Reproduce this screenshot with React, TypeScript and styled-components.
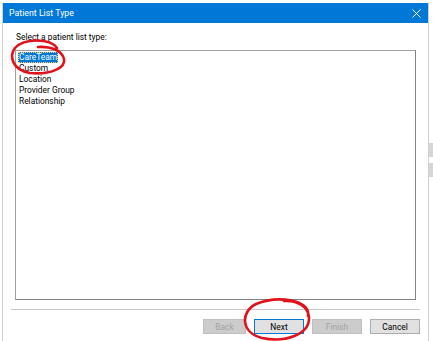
import styled, { createGlobalStyle } from "styled-components";

const GlobalStyle = createGlobalStyle`
  html, body {
    margin: 0;
    padding: 0;
    background: #ffffff;
  }
  body {
    font-family: Roboto, "Liberation Sans", Arial, sans-serif;
  }
`;

const Screen = styled.div`
  position: relative;
  width: 433px;
  height: 341px;
  display: flex;
  flex-direction: column;
  overflow: hidden;
  background: #f4f4f4;
`;

const TopStrip = styled.div`
  height: 3px;
  flex: none;
  overflow: hidden;
  background: #ffffff;
  display: flex;
  align-items: flex-end;
  gap: 40px;
  padding-left: 22px;
  font-size: 8px;
  line-height: 10px;
  color: #666;
  white-space: nowrap;
`;

const Middle = styled.div`
  flex: 1;
  display: flex;
  min-height: 0;
`;

const LeftStrip = styled.div`
  width: 3px;
  flex: none;
  background: #ffffff;
  border-right: 1px solid #d0d0d0;
  box-sizing: border-box;
`;

const RightStrip = styled.div`
  width: 5px;
  flex: none;
  background: #ffffff;
  border-left: 1px solid #cfcfcf;
  box-sizing: border-box;
  display: flex;
  flex-direction: column;
  gap: 6px;
  padding-top: 140px;
`;

const ScrollBlock = styled.div`
  height: 14px;
  background: #d6d6d6;
`;

const Dialog = styled.div`
  flex: 1;
  display: flex;
  flex-direction: column;
  background: #ffffff;
`;

const TitleBar = styled.div`
  height: 20px;
  flex: none;
  background: #0078d7;
  color: #ffffff;
  display: flex;
  align-items: center;
  justify-content: space-between;
  padding: 0 6px 0 6px;
  font-size: 8.8px;
`;

const CloseIcon = styled.svg`
  width: 9px;
  height: 9px;
  margin-right: 1px;
`;

const Body = styled.div`
  flex: 1;
  display: flex;
  flex-direction: column;
  padding: 8px 12px 0 12px;
`;

const Label = styled.div`
  font-size: 8.4px;
  line-height: 12px;
  color: #000;
  padding-left: 1px;
`;

const ListBox = styled.div`
  margin-top: 7px;
  height: 250px;
  box-sizing: border-box;
  border: 1px solid #828282;
  border-color: #a0a0a0 #828282 #828282 #a0a0a0;
  padding: 1px 2px;
  display: flex;
  flex-direction: column;
  align-items: flex-start;
`;

const Item = styled.div<{ $selected?: boolean }>`
  font-size: 8.4px;
  line-height: 11px;
  height: 11px;
  padding: 0 1px;
  color: ${(p) => (p.$selected ? "#ffffff" : "#000000")};
  background: ${(p) => (p.$selected ? "#0078d7" : "transparent")};
  outline: ${(p) => (p.$selected ? "1px dotted #ffcc66" : "none")};
  outline-offset: -1px;
`;

const Separator = styled.div`
  margin: 9px -4px 0 -4px;
  height: 1px;
  background: #c8c8c8;
`;

const ButtonRow = styled.div`
  margin: 9px -4px 0 0;
  display: flex;
  justify-content: flex-end;
  gap: 8px;
`;

const Button = styled.div<{ $disabled?: boolean; $focused?: boolean; $w?: number }>`
  width: ${(p) => p.$w ?? 50}px;
  height: 15px;
  box-sizing: border-box;
  display: flex;
  align-items: center;
  justify-content: center;
  font-size: 8.4px;
  color: ${(p) => (p.$disabled ? "#a3a3a3" : "#000")};
  background: ${(p) => (p.$disabled ? "#cccccc" : "#e1e1e1")};
  border: 1px solid
    ${(p) => (p.$focused ? "#0078d7" : p.$disabled ? "#bfbfbf" : "#adadad")};
`;

const Annotations = styled.svg`
  position: absolute;
  left: 0;
  top: 0;
  width: 433px;
  height: 341px;
  pointer-events: none;
`;

const items = ["CareTeam", "Custom", "Location", "Provider Group", "Relationship"];

export default function App() {
  return (
    <>
      <GlobalStyle />
      <Screen>
        <TopStrip>
          <span>ow</span>
          <span>Fres</span>
          <span>11</span>
          <span>68</span>
          <span>58</span>
          <span>20</span>
          <span>11</span>
          <span>139</span>
          <span>97 ALLERGY</span>
          <span>Mercy</span>
        </TopStrip>
        <Middle>
          <LeftStrip />
          <Dialog>
            <TitleBar>
              <span>Patient List Type</span>
              <CloseIcon viewBox="0 0 10 10">
                <path d="M0.5 0.5 L9.5 9.5 M9.5 0.5 L0.5 9.5" stroke="#ffffff" strokeWidth="1.1" />
              </CloseIcon>
            </TitleBar>
            <Body>
              <Label>Select a patient list type:</Label>
              <ListBox>
                {items.map((it, i) => (
                  <Item key={it} $selected={i === 0}>
                    {it}
                  </Item>
                ))}
              </ListBox>
              <Separator />
              <ButtonRow>
                <Button $disabled $w={43}>Back</Button>
                <Button $focused>Next</Button>
                <Button $disabled>Finish</Button>
                <Button>Cancel</Button>
              </ButtonRow>
            </Body>
          </Dialog>
          <RightStrip>
            <ScrollBlock />
            <ScrollBlock />
          </RightStrip>
        </Middle>
        <Annotations viewBox="0 0 433 341">
          <path
            d="M57 48 C50 38, 24 38, 15 48 C9 56, 12 70, 30 73 C50 75, 66 68, 64 59 C62 50, 50 46, 38 47"
            fill="none"
            stroke="#e0121b"
            strokeWidth="2.6"
            strokeLinecap="round"
          />
          <path
            d="M308 316 C311 300, 278 295, 256 304 C240 312, 241 333, 262 338 C286 343, 310 334, 309 317 C308 306, 296 300, 284 301"
            fill="none"
            stroke="#e0121b"
            strokeWidth="2.6"
            strokeLinecap="round"
          />
        </Annotations>
      </Screen>
    </>
  );
}
